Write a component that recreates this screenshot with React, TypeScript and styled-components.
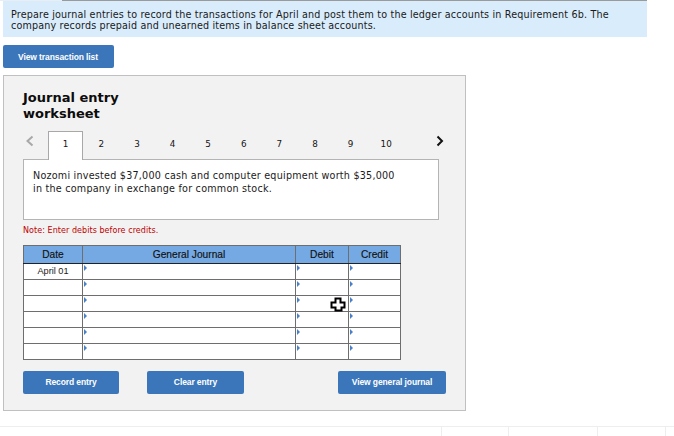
import React from "react";
import styled, { createGlobalStyle } from "styled-components";

const Global = createGlobalStyle`
  html, body { margin: 0; padding: 0; background: #fff; overflow: hidden; }
  body { font-family: "DejaVu Sans", Verdana, sans-serif; color: #111; }
`;
const Page = styled.div`
  width: 674px; height: 436px; display: flex; flex-direction: column; align-items: flex-start; overflow: hidden;
  & > * { flex: none; }
`;
const TopRule = styled.div`
  width: 647px; height: 1px; display: flex;
  background: #9a9a9a;
  &::before { content: ""; width: 62px; background: #e8eef3; }
`;
const Banner = styled.div`
  width: 644px; height: 36px; margin-left: 3px; box-sizing: border-box; padding: 8px 8px 0;
  background: #d9ecfb; font-size: 9.6px; line-height: 11px; letter-spacing: 0.165px; color: #1a1a1a; white-space: nowrap;
`;
const Btn = styled.button<{ $w: number }>`
  width: ${p => p.$w}px; height: 23px; padding: 0 0 1px; border: 0; border-radius: 2px; background: #3b76ba;
  color: #fff; font: bold 8.5px "Liberation Sans", Arial, sans-serif; letter-spacing: -0.1px;
`;
const TopBtn = styled(Btn)`
  margin: 8px 0 7px 3px; padding: 1px 1px 0 0;
`;
const Panel = styled.section`
  width: 463px; height: 336px; margin-left: 3px; box-sizing: border-box;
  background: #f2f2f2; border: 1px solid #c0c0c0; padding: 14px 19px 0;
`;
const Title = styled.h2`
  margin: 0; width: 120px; font-size: 13px; line-height: 16px; font-weight: 700; color: #0c0c0c;
`;
const TabRow = styled.div`
  display: flex; align-items: flex-start; height: 29px; margin-top: 9px; position: relative; z-index: 1;
`;
const Arrow = styled.svg`
  width: 25px; height: 29px; flex: none;
`;
const Tab = styled.div<{ $active?: boolean }>`
  width: 35.6px; height: 29px; flex: none; box-sizing: border-box; text-align: center;
  font-size: 8.8px; line-height: 25px; padding-top: 1px; color: #151515;
  ${p => p.$active ? "background:#fff;border:1px solid #a8a8a8;border-bottom:0;padding-top:0;width:35px;margin-right:.6px;" : ""}
`;
const Spacer = styled.div`flex: 1;`;
const Prompt = styled.div`
  width: 416px; height: 61px; box-sizing: border-box; background: #fff; border: 1px solid #b4b4b4;
  margin-top: -1px; padding: 9px 9px 0; font-size: 9.6px; line-height: 13px; letter-spacing: 0.23px; color: #1a1a1a; white-space: nowrap;
`;
const Note = styled.div`
  margin-top: 6px; height: 19px; font-size: 8px; line-height: 10px; letter-spacing: 0.06px; color: #c00000; white-space: nowrap;
`;
const TableWrap = styled.div`position: relative; width: 378px;`;
const Table = styled.table`
  width: 377px; table-layout: fixed; border-collapse: collapse; font-family: "Liberation Sans", Arial, sans-serif;
`;
const Th = styled.th<{ $w: number }>`
  width: ${p => p.$w}px; box-sizing: border-box; height: 18px; padding: 0; background: #75a9e4; border: 1px solid #6e6e6e;
  border-bottom-color: #222; font-size: 10.2px; font-weight: 400; color: #111; -webkit-text-stroke: 0.15px #111;
  &+& { border-left-color: #222; }
`;
const Td = styled.td`
  height: 16px; box-sizing: border-box; padding: 0; background: #fff; border: 1px solid #6e6e6e; position: relative;
  font-size: 9.2px; text-align: center; line-height: 15px; vertical-align: top; color: #222;
`;
const Marker = styled.span`
  position: absolute; left: 1px; top: 1px; width: 0; height: 0;
  border-left: 3.5px solid #4a80c8; border-top: 3px solid transparent; border-bottom: 3px solid transparent;
`;
const Cursor = styled.svg`
  position: absolute; left: 307px; top: 52px; width: 16px; height: 16px;
`;
const Actions = styled.div`
  display: flex; width: 423px; margin-top: 11px;
`;
const Gap = styled.div<{ $w: number }>`width: ${p => p.$w}px; flex: none;`;
const Footer = styled.div`
  width: 674px; margin-top: 15px; height: 10px; border-top: 1px solid #eee; display: flex;
`;
const FootCell = styled.div<{ $w: number }>`
  width: ${p => p.$w}px; height: 100%; box-sizing: border-box; border-right: 1px solid #eee; flex: none;
`;

const rows = ["April 01", "", "", "", "", ""];

export default function App() {
  return (
    <Page>
      <Global />
      <TopRule />
      <Banner>
        Prepare journal entries to record the transactions for April and post them to the ledger accounts in Requirement 6b. The<br />
        company records prepaid and unearned items in balance sheet accounts.
      </Banner>
      <TopBtn $w={111}>View transaction list</TopBtn>
      <Panel>
        <Title>Journal entry worksheet</Title>
        <TabRow>
          <Arrow viewBox="0 0 25 29">
            <path d="M9.5 5.5 L4.5 10 L9.5 14.5" fill="none" stroke="#a8a8a8" strokeWidth="2" />
          </Arrow>
          {[1, 2, 3, 4, 5, 6, 7, 8, 9, 10].map(n => (
            <Tab key={n} $active={n === 1}>{n}</Tab>
          ))}
          <Spacer />
          <Arrow viewBox="0 0 25 29">
            <path d="M16.5 5.5 L21 10 L16.5 14.5" fill="none" stroke="#111" strokeWidth="2" />
          </Arrow>
        </TabRow>
        <Prompt>
          Nozomi invested $37,000 cash and computer equipment worth $35,000<br />
          in the company in exchange for common stock.
        </Prompt>
        <Note>Note: Enter debits before credits.</Note>
        <TableWrap>
          <Table>
            <thead>
              <tr>
                <Th $w={59}>Date</Th>
                <Th $w={213}>General Journal</Th>
                <Th $w={53}>Debit</Th>
                <Th $w={52}>Credit</Th>
              </tr>
            </thead>
            <tbody>
              {rows.map((d, i) => (
                <tr key={i}>
                  <Td>{d}</Td>
                  <Td><Marker /></Td>
                  <Td><Marker /></Td>
                  <Td><Marker /></Td>
                </tr>
              ))}
            </tbody>
          </Table>
          <Cursor viewBox="0 0 16 16">
            <path d="M5.5 1.5 H10.5 V5.5 H14.5 V10.5 H11.5 V13.5 H5.5 V10.5 H1.5 V5.5 H5.5 Z" fill="#fff" stroke="#000" strokeWidth="2" />
          </Cursor>
        </TableWrap>
        <Actions>
          <Btn $w={96}>Record entry</Btn>
          <Gap $w={28} />
          <Btn $w={97}>Clear entry</Btn>
          <Gap $w={94} />
          <Btn $w={108}>View general journal</Btn>
        </Actions>
      </Panel>
      <Footer>
        <FootCell $w={442} />
        <FootCell $w={67} />
        <FootCell $w={89} />
        <FootCell $w={68} />
      </Footer>
    </Page>
  );
}
